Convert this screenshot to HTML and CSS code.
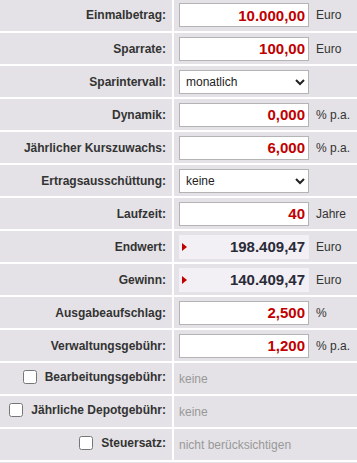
FILE: index.html
```html
<!DOCTYPE html>
<html lang="de">
<head>
    <meta charset="UTF-8">
    <meta name="viewport" content="width=device-width, initial-scale=1.0">
    <title>Sparplanrechner</title>
    <link rel="stylesheet" href="styles.css">
</head>
<body>
    <table class="calc">
        <tr>
            <td class="label">Einmalbetrag:</td>
            <td class="field"><input class="num" type="text" value="10.000,00"><span class="unit">Euro</span></td>
        </tr>
        <tr>
            <td class="label">Sparrate:</td>
            <td class="field"><input class="num" type="text" value="100,00"><span class="unit">Euro</span></td>
        </tr>
        <tr>
            <td class="label">Sparintervall:</td>
            <td class="field">
                <select class="choice">
                    <option>monatlich</option>
                    <option>vierteljährlich</option>
                    <option>jährlich</option>
                </select>
            </td>
        </tr>
        <tr>
            <td class="label">Dynamik:</td>
            <td class="field"><input class="num" type="text" value="0,000"><span class="unit">% p.a.</span></td>
        </tr>
        <tr>
            <td class="label">Jährlicher Kurszuwachs:</td>
            <td class="field"><input class="num" type="text" value="6,000"><span class="unit">% p.a.</span></td>
        </tr>
        <tr>
            <td class="label">Ertragsausschüttung:</td>
            <td class="field">
                <select class="choice">
                    <option>keine</option>
                    <option>jährlich</option>
                </select>
            </td>
        </tr>
        <tr>
            <td class="label">Laufzeit:</td>
            <td class="field"><input class="num" type="text" value="40"><span class="unit">Jahre</span></td>
        </tr>
        <tr>
            <td class="label">Endwert:</td>
            <td class="field"><div class="result"><span class="arrow"></span>198.409,47</div><span class="unit">Euro</span></td>
        </tr>
        <tr>
            <td class="label">Gewinn:</td>
            <td class="field"><div class="result"><span class="arrow"></span>140.409,47</div><span class="unit">Euro</span></td>
        </tr>
        <tr>
            <td class="label">Ausgabeaufschlag:</td>
            <td class="field"><input class="num" type="text" value="2,500"><span class="unit">%</span></td>
        </tr>
        <tr>
            <td class="label">Verwaltungsgebühr:</td>
            <td class="field"><input class="num" type="text" value="1,200"><span class="unit">% p.a.</span></td>
        </tr>
        <tr>
            <td class="label"><label><input type="checkbox" class="check">Bearbeitungsgebühr:</label></td>
            <td class="field muted">keine</td>
        </tr>
        <tr>
            <td class="label"><label><input type="checkbox" class="check">Jährliche Depotgebühr:</label></td>
            <td class="field muted">keine</td>
        </tr>
        <tr>
            <td class="label"><label><input type="checkbox" class="check">Steuersatz:</label></td>
            <td class="field muted">nicht berücksichtigen</td>
        </tr>
    </table>
</body>
</html>
```

FILE: styles.css
```css
* {
    margin: 0;
    padding: 0;
    box-sizing: border-box;
    font-family: 'Liberation Sans', Arial, sans-serif;
}

body {
    background-color: #e4e2e6;
    color: #333;
    font-size: 12px;
}

.calc {
    width: 357px;
    border-collapse: collapse;
    margin-top: -1px;
}

.calc td {
    height: 33px;
    border-bottom: 2px solid #fff;
    vertical-align: middle;
}

/* Label column */
.label {
    width: 173px;
    border-right: 2px solid #fff;
    padding-right: 6px;
    text-align: right;
    font-weight: bold;
    white-space: nowrap;
}

.label label {
    display: inline-flex;
    align-items: center;
}

.check {
    width: 14px;
    height: 14px;
    margin-right: 8px;
}

/* Value column */
.field {
    padding-left: 5px;
    white-space: nowrap;
}

.num {
    width: 130px;
    height: 24px;
    border: 1px solid #b4b4b4;
    background-color: #fff;
    padding: 0 3px 0 4px;
    text-align: right;
    font-size: 15px;
    font-weight: bold;
    color: #c00000;
    vertical-align: middle;
}

.unit {
    display: inline-block;
    margin-left: 7px;
    vertical-align: middle;
}

.choice {
    width: 130px;
    height: 24px;
    border: 1px solid #b4b4b4;
    border-radius: 0;
    background-color: #fff;
    padding-left: 2px;
    font-size: 12px;
    color: #222;
    vertical-align: middle;
}

.result {
    display: inline-flex;
    align-items: center;
    justify-content: flex-end;
    position: relative;
    width: 130px;
    height: 24px;
    background-color: #f2f0f4;
    padding-right: 4px;
    font-size: 15px;
    font-weight: bold;
    color: #2a2a38;
    vertical-align: middle;
}

.arrow {
    position: absolute;
    left: 3px;
    top: 8px;
    border-top: 4px solid transparent;
    border-bottom: 4px solid transparent;
    border-left: 5px solid #c00000;
}

.muted {
    color: #999;
}
```
